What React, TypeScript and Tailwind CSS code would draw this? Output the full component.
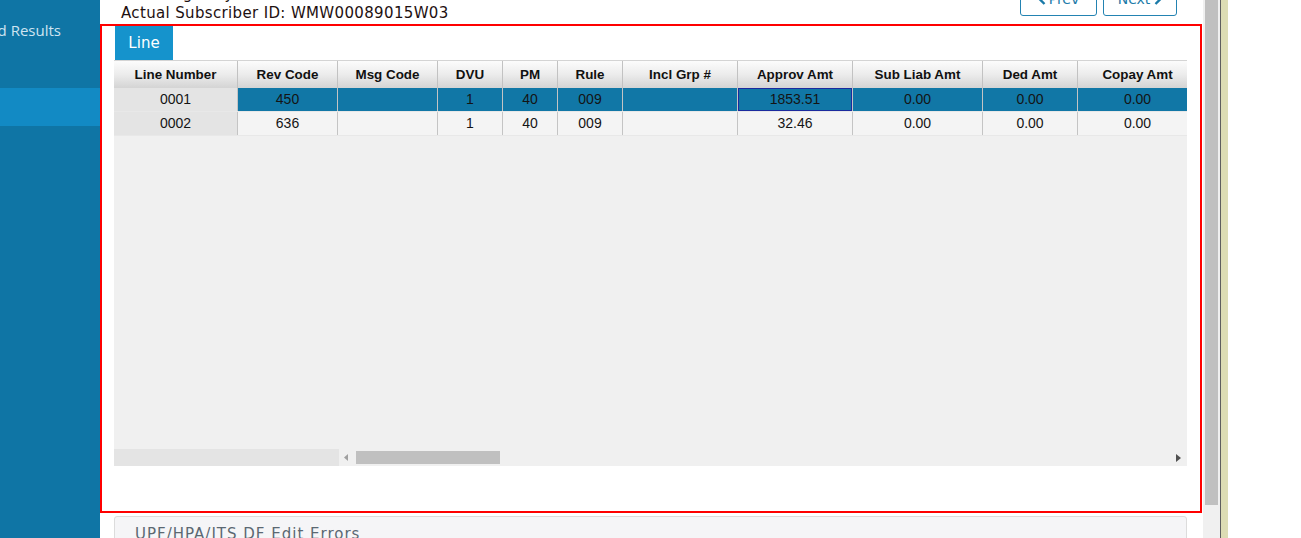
import React from "react";

const cols = [
  "Line Number",
  "Rev Code",
  "Msg Code",
  "DVU",
  "PM",
  "Rule",
  "Incl Grp #",
  "Approv Amt",
  "Sub Liab Amt",
  "Ded Amt",
  "Copay Amt",
];

const rows = [
  ["0001", "450", "", "1", "40", "009", "", "1853.51", "0.00", "0.00", "0.00"],
  ["0002", "636", "", "1", "40", "009", "", "32.46", "0.00", "0.00", "0.00"],
];

const gridCls =
  "grid grid-cols-[124px_100px_100px_65px_55px_65px_115px_115px_130px_95px_120px]";

function ChevronLeft() {
  return (
    <svg width="8" height="11" viewBox="0 0 8 11" className="shrink-0">
      <path d="M6.5 1 L2 5.5 L6.5 10" stroke="#1a7aa8" strokeWidth="2.4" fill="none" />
    </svg>
  );
}
function ChevronRight() {
  return (
    <svg width="8" height="11" viewBox="0 0 8 11" className="shrink-0">
      <path d="M1.5 1 L6 5.5 L1.5 10" stroke="#1a7aa8" strokeWidth="2.4" fill="none" />
    </svg>
  );
}

export default function App() {
  return (
    <div className="flex h-[538px] w-[1301px] overflow-hidden bg-white">
      {/* Sidebar */}
      <div className="flex w-[100px] shrink-0 flex-col bg-[#0f75a5]">
        <div className="flex h-[88px] shrink-0 justify-end overflow-hidden pr-[39px] pt-[20px]">
          <span className="whitespace-nowrap font-['Open_Sans',sans-serif] text-[15px] leading-[20px] text-[#cfe4f1]">
            Claim Search and Results
          </span>
        </div>
        <div className="h-[38px] shrink-0 bg-[#128ac4]" />
      </div>

      {/* Main */}
      <div className="flex w-[1103px] shrink-0 flex-col">
        {/* top row */}
        <div className="relative flex h-[24px] shrink-0 items-start">
          <div className="flex flex-col pl-[21px]">
            <span className="-mt-[15px] h-[19px] whitespace-nowrap pl-[44px] font-['DejaVu_Sans',sans-serif] text-[15px] leading-[19px] text-[#1e1010]">
              Eligibility
            </span>
            <span className="whitespace-nowrap font-['DejaVu_Sans',sans-serif] text-[15px] leading-[19px] tracking-[0.35px] text-[#1e1010]">
              Actual Subscriber ID: WMW00089015W03
            </span>
          </div>
          <div className="ml-auto mr-[26px] flex gap-[6px]">
            <button className="-mt-[17px] flex h-[33px] w-[77px] items-center justify-center gap-[3px] rounded-[3px] border border-[#2383b2] bg-white font-['DejaVu_Sans',sans-serif] text-[14px] text-[#1a7aa8]">
              <ChevronLeft />
              <span>Prev</span>
            </button>
            <button className="-mt-[17px] flex h-[33px] w-[74px] items-center justify-center gap-[4px] rounded-[3px] border border-[#2383b2] bg-white font-['DejaVu_Sans',sans-serif] text-[14px] text-[#1a7aa8]">
              <span>Next</span>
              <ChevronRight />
            </button>
          </div>
        </div>

        {/* red box */}
        <div className="flex h-[489px] w-[1102px] shrink-0 flex-col border-2 border-[#ff0000] bg-white">
          <div className="flex h-[34px] shrink-0 pl-[13px]">
            <div className="flex w-[58px] items-center justify-center bg-[#1593cc] font-['DejaVu_Sans',sans-serif] text-[15px] text-white">
              Line
            </div>
          </div>
          {/* table */}
          <div className="ml-[12px] flex h-[406px] w-[1073px] shrink-0 flex-col overflow-hidden bg-[#f0f0f0] font-['Liberation_Sans',Arial,sans-serif]">
            <div
              className={`${gridCls} h-[28px] shrink-0 border-t border-[#d4d4d4] bg-linear-to-b from-[#fcfcfc] via-[#ececec] to-[#d4d4d4]`}
            >
              {cols.map((c) => (
                <div
                  key={c}
                  className="flex items-center justify-center border-r border-[#c2c2c2] pt-[1px] text-[13.4px] font-bold text-[#111]"
                >
                  {c}
                </div>
              ))}
            </div>
            {rows.map((r, ri) => (
              <div key={ri} className={`${gridCls} h-[24px] shrink-0 border-b border-[#e8e8e8]`}>
                {r.map((v, ci) => {
                  const first = ci === 0;
                  const sel = ri === 0;
                  const focus = sel && ci === 7;
                  const bg = first ? "bg-[#e4e4e4]" : sel ? "bg-[#1177a6]" : "bg-[#f4f4f4]";
                  return (
                    <div
                      key={ci}
                      className={`flex items-center justify-center border-r border-[#c4c4c4] text-[14px] text-[#141414] ${bg} ${
                        focus ? "shadow-[inset_0_0_0_1px_#1b2a9e]" : ""
                      }`}
                    >
                      {v}
                    </div>
                  );
                })}
              </div>
            ))}
            <div className="flex-1" />
            {/* horizontal scrollbar */}
            <div className="flex h-[17px] shrink-0">
              <div className="w-[225px] bg-[#e4e4e4]" />
              <div className="flex flex-1 items-center bg-[#f0f0f0]">
                <svg width="4" height="7" viewBox="0 0 4 7" className="ml-[5px]">
                  <path d="M4 0 L0 3.5 L4 7 Z" fill="#a0a0a0" />
                </svg>
                <div className="ml-[8px] h-[13px] w-[144px] bg-[#c0c0c0]" />
                <div className="flex-1" />
                <svg width="5" height="8" viewBox="0 0 5 8" className="mr-[6px]">
                  <path d="M0 0 L5 4 L0 8 Z" fill="#505050" />
                </svg>
              </div>
            </div>
          </div>
        </div>

        {/* bottom panel */}
        <div className="ml-[14px] mt-[3px] h-[40px] w-[1073px] shrink-0 rounded-t-[3px] border border-[#dcdcdc] bg-[#f5f5f7] pl-[20px] pt-[4px]">
          <span className="whitespace-nowrap font-['DejaVu_Sans',sans-serif] text-[15px] tracking-[1px] text-[#5b6872]">
            UPF/HPA/ITS DF Edit Errors
          </span>
        </div>
      </div>

      {/* page scrollbar */}
      <div className="flex w-[17px] shrink-0 flex-col bg-[#f0f0f0] pl-[2px] pr-[2px]">
        <div className="h-[505px] shrink-0 bg-[#c0c0c0]" />
      </div>
      <div className="w-[1px] shrink-0 bg-[#5e5e5e]" />
      <div className="w-[7px] shrink-0 bg-[#dcdcb4]" />
      <div className="flex-1 bg-white" />
    </div>
  );
}
